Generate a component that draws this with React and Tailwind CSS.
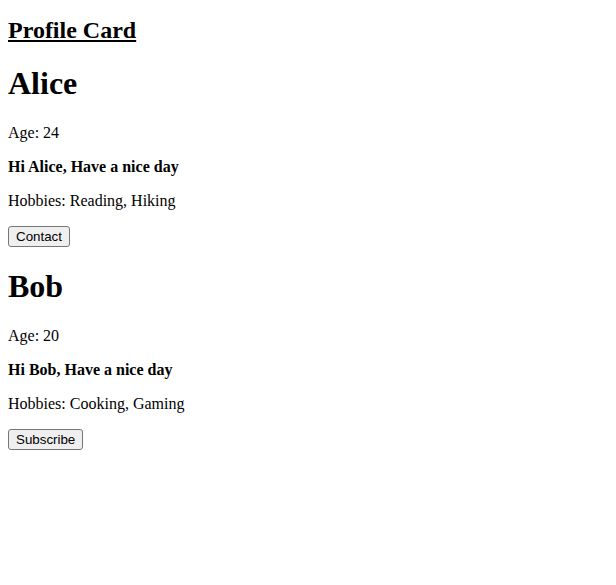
import React from 'react';

const profiles = [
  { name: 'Alice', age: 24, hobbies: ['Reading', 'Hiking'], action: 'Contact' },
  { name: 'Bob', age: 20, hobbies: ['Cooking', 'Gaming'], action: 'Subscribe' },
];

const Profile = ({ name, age, hobbies, action }) => (
  <div>
    <h1 className="text-[32px] leading-[normal] font-bold my-[21.44px]">{name}</h1>
    <p className="text-base leading-[normal] my-4">Age: {age}</p>
    <p className="text-base leading-[normal] font-bold my-4">Hi {name}, Have a nice day</p>
    <p className="text-base leading-[normal] my-4">Hobbies: {hobbies.join(', ')}</p>
    <button className="font-['Liberation_Sans',Arial,sans-serif] text-[13.33px] leading-[normal] px-[7px] py-[2px] bg-[#efefef] border border-[#767676] rounded-[3px] text-black">
      {action}
    </button>
  </div>
);

export default function App() {
  return (
    <div className="min-h-[585px] bg-white px-2 pt-px font-['Liberation_Serif',serif] leading-[normal] text-black">
      <h2 className="text-2xl leading-[normal] font-bold underline mt-4 mb-[19.92px]">Profile Card</h2>
      {profiles.map((p) => (
        <Profile key={p.name} {...p} />
      ))}
    </div>
  );
}
